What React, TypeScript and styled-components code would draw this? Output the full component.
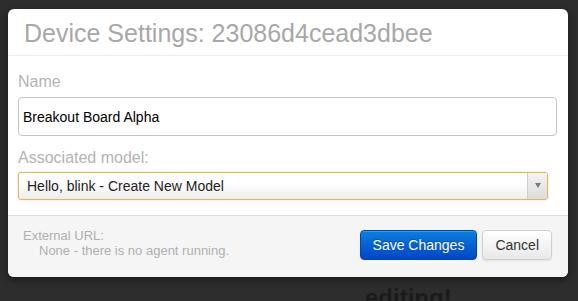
import React from 'react'
import styled, { createGlobalStyle } from 'styled-components'

const GlobalStyle = createGlobalStyle`
  html, body {
    margin: 0;
    padding: 0;
    background: #2d2d2d;
    overflow: hidden;
  }
  body {
    font-family: 'Liberation Sans', Arial, sans-serif;
  }
`

const Page = styled.div`
  width: 578px;
  height: 301px;
  padding: 9px 0 0 8px;
  box-sizing: border-box;
  overflow: hidden;
`

const Modal = styled.div`
  width: 560px;
  background: #fff;
  border-radius: 6px;
  box-shadow: 0 3px 7px rgba(0, 0, 0, 0.45);
  overflow: hidden;
`

const Header = styled.div`
  padding: 9px 16px 7px 16px;
  border-bottom: 1px solid #eee;
`

const Title = styled.h3`
  margin: 0;
  font-size: 25px;
  line-height: 30px;
  font-weight: normal;
  color: #a8a8a8;
`

const Body = styled.div`
  padding: 16px 11px 15px 10px;
`

const Label = styled.label<{ $gap?: number }>`
  display: block;
  font-size: 16px;
  line-height: 20px;
  color: #b3b3b3;
  margin-top: ${p => p.$gap || 0}px;
`

const TextInput = styled.input`
  display: block;
  box-sizing: border-box;
  width: 539px;
  height: 39px;
  margin-top: 5px;
  padding: 0 4px;
  border: 1px solid #c4c4c4;
  border-radius: 4px;
  font-family: 'Liberation Sans', Arial, sans-serif;
  font-size: 14px;
  color: #000;
  outline: none;
`

const Select = styled.div`
  display: flex;
  box-sizing: border-box;
  width: 530px;
  height: 28px;
  margin-top: 4px;
  border: 1px solid #e6b45a;
  border-radius: 3px;
  background: linear-gradient(#ffffff 40%, #ededed);
  box-shadow: 0 0 2px rgba(232, 180, 80, 0.6);
  overflow: hidden;
`

const SelectValue = styled.span`
  flex: 1;
  padding-left: 8px;
  font-size: 14px;
  line-height: 26px;
  color: #222;
`

const SelectArrow = styled.span`
  width: 19px;
  display: flex;
  align-items: center;
  justify-content: center;
  border-left: 1px solid #cfcfcf;
  background: linear-gradient(#f4f4f4, #dcdcdc);

  &::after {
    content: '';
    border-left: 3px solid transparent;
    border-right: 3px solid transparent;
    border-top: 5px solid #7a7a7a;
    margin-top: -1px;
  }
`

const Footer = styled.div`
  display: flex;
  justify-content: space-between;
  align-items: flex-start;
  padding: 12px 16px 17px 15px;
  background: #f5f5f5;
  border-top: 1px solid #ddd;
`

const UrlInfo = styled.div`
  font-size: 13px;
  line-height: 15px;
  color: #b0b0b0;
`

const UrlValue = styled.div`
  padding-left: 16px;
`

const Buttons = styled.div`
  display: flex;
  gap: 5px;
  margin-top: 2px;
`

const Button = styled.button<{ $primary?: boolean }>`
  height: 30px;
  padding: 0 12px;
  font-family: 'Liberation Sans', Arial, sans-serif;
  font-size: 14px;
  border-radius: 4px;
  cursor: pointer;
  color: ${p => (p.$primary ? '#fff' : '#333')};
  border: 1px solid ${p => (p.$primary ? '#0044b8' : '#cfcfcf')};
  background: ${p =>
    p.$primary
      ? 'linear-gradient(#0a80dd, #0045c8)'
      : 'linear-gradient(#ffffff, #e8e8e8)'};
  box-shadow: ${p =>
    p.$primary
      ? 'inset 0 1px 0 rgba(255,255,255,0.2)'
      : 'inset 0 1px 0 rgba(255,255,255,0.6), 0 1px 2px rgba(0,0,0,0.08)'};
  text-shadow: ${p => (p.$primary ? '0 -1px 0 rgba(0,0,0,0.25)' : 'none')};
`

const Behind = styled.h2`
  margin: 8px 0 0 357px;
  font-size: 24px;
  line-height: 26px;
  font-weight: bold;
  color: #1b1b1b;
`

const App: React.FunctionComponent = () => {
  return <>
    <GlobalStyle/>
    <Page>
      <Modal>
        <Header>
          <Title>Device Settings: 23086d4cead3dbee</Title>
        </Header>
        <Body>
          <Label>Name</Label>
          <TextInput defaultValue="Breakout Board Alpha"/>
          <Label $gap={12}>Associated model:</Label>
          <Select>
            <SelectValue>Hello, blink - Create New Model</SelectValue>
            <SelectArrow/>
          </Select>
        </Body>
        <Footer>
          <UrlInfo>
            External URL:
            <UrlValue>None - there is no agent running.</UrlValue>
          </UrlInfo>
          <Buttons>
            <Button $primary>Save Changes</Button>
            <Button>Cancel</Button>
          </Buttons>
        </Footer>
      </Modal>
      <Behind>editing!</Behind>
    </Page>
  </>
}

export default App
